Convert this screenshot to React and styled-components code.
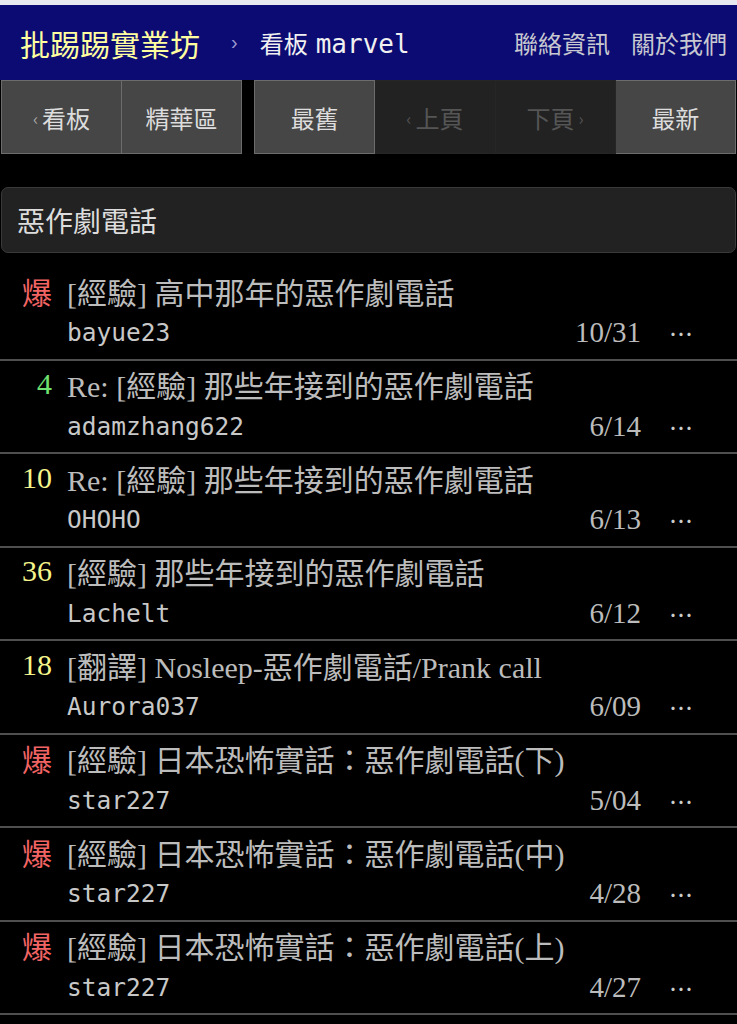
import React from "react";
import styled, { createGlobalStyle } from "styled-components";

const Global = createGlobalStyle`
  html, body { margin: 0; padding: 0; background: #000; }
  body { font-family: "Liberation Sans", "Noto Sans CJK TC", sans-serif; color: #ccc; }
  * { box-sizing: border-box; }
`;

const Page = styled.div`
  width: 737px;
  min-height: 1024px;
  background: #000;
  overflow: hidden;
`;

const TopStrip = styled.div`
  height: 5px;
  background: #e9e9f0;
`;

const TopBar = styled.header`
  height: 75px;
  background: #0b0b73;
  display: flex;
  align-items: center;
  padding: 0 10px 0 20px;
`;

const Logo = styled.a`
  font-family: "Liberation Sans", "Noto Sans CJK TC", sans-serif;
  font-size: 30px;
  color: #ffffa0;
  text-decoration: none;
`;

const Chevron = styled.span`
  color: #9a9ad0;
  font-size: 20px;
  margin: 0 22px 0 31px;
`;

const Board = styled.span`
  font-family: "Noto Sans CJK TC", sans-serif;
  font-size: 24px;
  color: #f0f0f0;
`;

const BoardName = styled.span`
  font-family: "DejaVu Sans Mono", monospace;
  font-size: 26px;
  margin-left: 8px;
`;

const Links = styled.nav`
  margin-left: auto;
  display: flex;
  gap: 21px;
`;

const TopLink = styled.a`
  font-family: "Noto Sans CJK TC", sans-serif;
  font-size: 24px;
  color: #c8c8d0;
  text-decoration: none;
`;

const ActionBar = styled.div`
  display: flex;
  gap: 12px;
  padding: 0 1px;
  height: 74px;
`;

const Group = styled.div`
  display: flex;
  flex: ${(p) => (p.$fixed ? "0 0 241px" : "1 1 auto")};
`;

const Btn = styled.a`
  flex: 1 1 0;
  display: flex;
  align-items: center;
  justify-content: center;
  font-family: "Noto Sans CJK TC", sans-serif;
  font-size: 24px;
  text-decoration: none;
  background: ${(p) => (p.$disabled ? "#222" : "#464646")};
  color: ${(p) => (p.$disabled ? "#555" : "#ddd")};
  border: 1px solid ${(p) => (p.$disabled ? "#262626" : "#6c6c6c")};
  & + & { border-left-width: 0; }
`;

const Arrow = styled.span`
  font-size: 17px;
  color: ${(p) => (p.$disabled ? "#555" : "#aaa")};
  margin: ${(p) => (p.$right ? "0 0 0 4px" : "0 4px 0 0")};
`;

const SearchBox = styled.div`
  margin: 33px 1px 14px;
  height: 66px;
  background: #222;
  border: 1px solid #3a3a3a;
  border-radius: 7px;
  display: flex;
  align-items: center;
  padding-left: 15px;
  font-family: "Noto Sans CJK TC", sans-serif;
  font-size: 28px;
  color: #ddd;
`;

const List = styled.div`
  display: flex;
  flex-direction: column;
`;

const Row = styled.div`
  display: grid;
  grid-template-columns: 67px 1fr auto 96px;
  grid-template-rows: 40px 44px;
  height: 93.5px;
  padding: 3.5px 0 6px;
  border-bottom: 2px solid #4f4f4f;
  align-items: center;
`;

const Nrec = styled.div`
  text-align: right;
  padding-right: 15px;
  font-family: "Liberation Serif", "Noto Sans CJK TC", serif;
  font-size: 30px;
  color: ${(p) => p.$color};
`;

const Title = styled.a`
  grid-column: 2 / 5;
  font-family: "Liberation Serif", "Noto Sans CJK TC", serif;
  font-size: 30px;
  color: #bcbcbc;
  text-decoration: none;
  white-space: nowrap;
`;

const Author = styled.div`
  grid-column: 2;
  font-family: "DejaVu Sans Mono", monospace;
  font-size: 24.5px;
  color: #c8c8c8;
`;

const DateCell = styled.div`
  grid-column: 3;
  font-family: "Liberation Serif", serif;
  font-size: 29px;
  color: #bcbcbc;
  text-align: right;
`;

const Trigger = styled.div`
  grid-column: 4;
  padding-left: 28px;
  font-family: "Noto Sans CJK TC", sans-serif;
  font-size: 24px;
  color: #ccc;
`;

const COLORS = { boom: "#f26464", green: "#70e070", yellow: "#f5f58c" };

const posts = [
  { rec: "爆", c: "boom", title: "[經驗] 高中那年的惡作劇電話", author: "bayue23", date: "10/31" },
  { rec: "4", c: "green", title: "Re: [經驗] 那些年接到的惡作劇電話", author: "adamzhang622", date: "6/14" },
  { rec: "10", c: "yellow", title: "Re: [經驗] 那些年接到的惡作劇電話", author: "OHOHO", date: "6/13" },
  { rec: "36", c: "yellow", title: "[經驗] 那些年接到的惡作劇電話", author: "Lachelt", date: "6/12" },
  { rec: "18", c: "yellow", title: "[翻譯] Nosleep-惡作劇電話/Prank call", author: "Aurora037", date: "6/09" },
  { rec: "爆", c: "boom", title: "[經驗] 日本恐怖實話：惡作劇電話(下)", author: "star227", date: "5/04" },
  { rec: "爆", c: "boom", title: "[經驗] 日本恐怖實話：惡作劇電話(中)", author: "star227", date: "4/28" },
  { rec: "爆", c: "boom", title: "[經驗] 日本恐怖實話：惡作劇電話(上)", author: "star227", date: "4/27" },
];

export default function App() {
  return (
    <Page>
      <Global />
      <TopStrip />
      <TopBar>
        <Logo href="#">批踢踢實業坊</Logo>
        <Chevron>›</Chevron>
        <Board>
          看板<BoardName>marvel</BoardName>
        </Board>
        <Links>
          <TopLink href="#">聯絡資訊</TopLink>
          <TopLink href="#">關於我們</TopLink>
        </Links>
      </TopBar>
      <ActionBar>
        <Group $fixed>
          <Btn href="#"><Arrow>‹</Arrow>看板</Btn>
          <Btn href="#">精華區</Btn>
        </Group>
        <Group>
          <Btn href="#">最舊</Btn>
          <Btn $disabled><Arrow $disabled>‹</Arrow>上頁</Btn>
          <Btn $disabled>下頁<Arrow $disabled $right>›</Arrow></Btn>
          <Btn href="#">最新</Btn>
        </Group>
      </ActionBar>
      <SearchBox>惡作劇電話</SearchBox>
      <List>
        {posts.map((p, i) => (
          <Row key={i}>
            <Nrec $color={COLORS[p.c]}>{p.rec}</Nrec>
            <Title href="#">{p.title}</Title>
            <Author>{p.author}</Author>
            <DateCell>{p.date}</DateCell>
            <Trigger>⋯</Trigger>
          </Row>
        ))}
      </List>
    </Page>
  );
}
